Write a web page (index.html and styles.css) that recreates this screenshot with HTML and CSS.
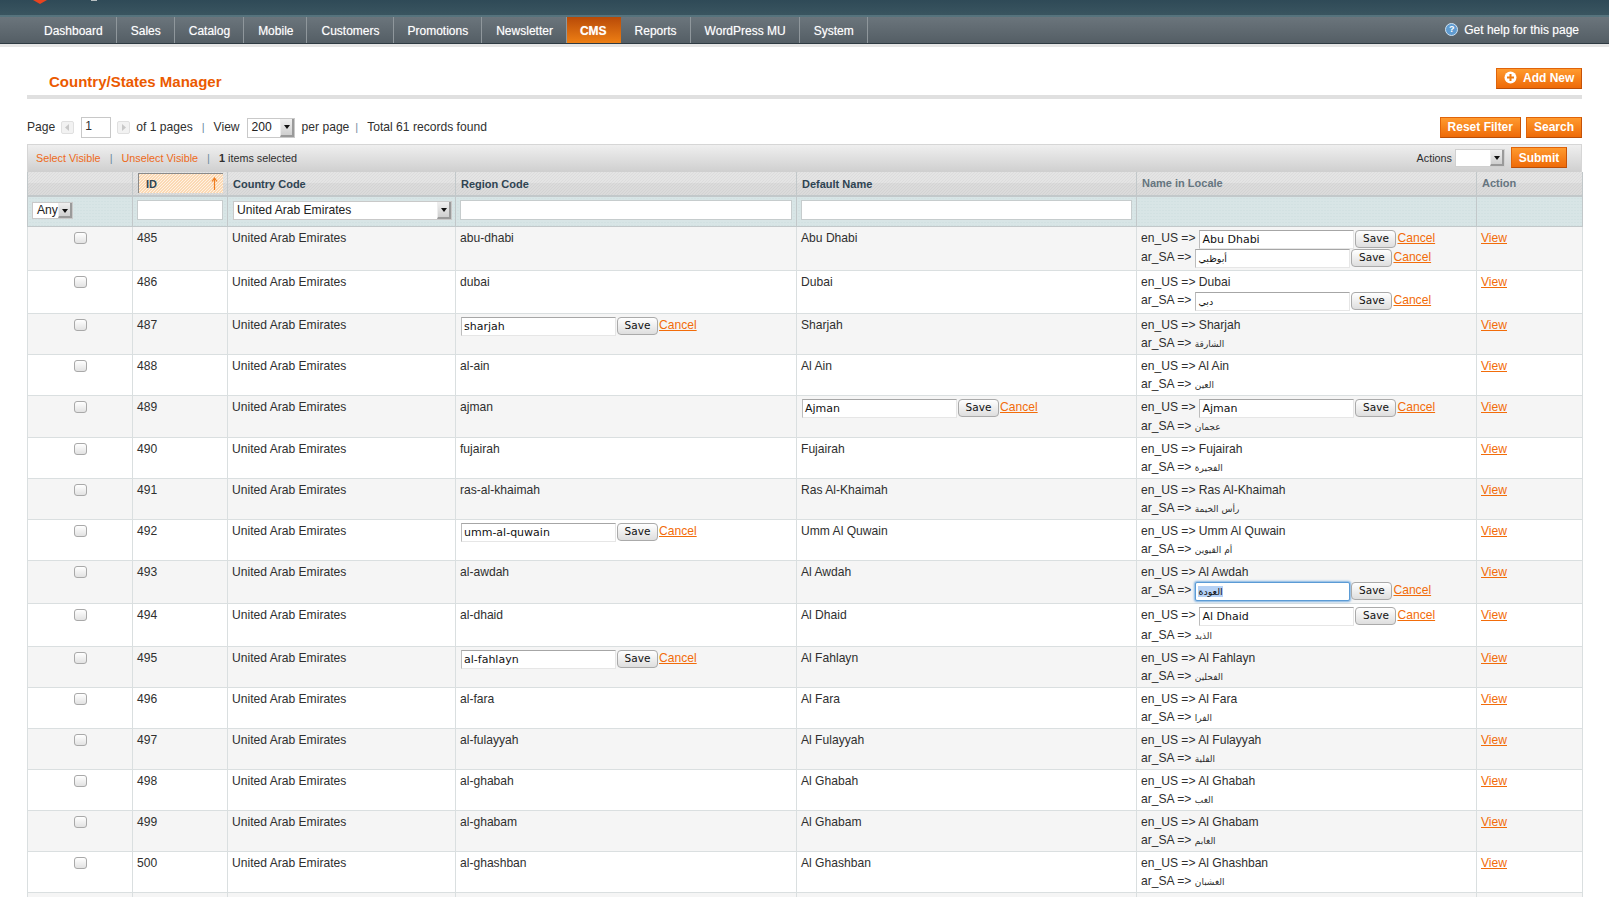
FILE: index.html
```html
<!DOCTYPE html>
<html lang="en">
<head>
<meta charset="utf-8">
<title>Country/States Manager</title>
<link rel="stylesheet" href="styles.css">
</head>
<body>
<header class="masthead">
  <div class="topbar">
    <svg class="logo-tip" width="14" height="4" viewBox="0 0 14 4"><path d="M0 0H14L7 4Z" fill="#e8431f"/></svg>
    <span class="logo-rest"></span>
  </div>
  <nav class="nav">
    <ul class="menu">
      <li>Dashboard</li><li>Sales</li><li>Catalog</li><li>Mobile</li><li>Customers</li><li>Promotions</li><li>Newsletter</li><li class="active">CMS</li><li>Reports</li><li>WordPress MU</li><li>System</li>
    </ul>
    <div class="help"><span class="help-icon">?</span>Get help for this page</div>
  </nav>
</header>
<main class="content">
  <div class="title-row">
    <h1>Country/States Manager</h1>
    <button class="btn add"><svg width="13" height="13" viewBox="0 0 13 13"><circle cx="6.5" cy="6.5" r="6" fill="#fff"/><path d="M6.5 3V10M3 6.5H10" stroke="#ee7a10" stroke-width="2"/></svg>Add New</button>
  </div>
  <div class="pager">
    <span>Page</span>
    <span class="pg-arrow prev"><svg width="5" height="7" viewBox="0 0 5 7"><path d="M4 0V7L0 3.5Z" fill="#c8c8c8"/></svg></span>
    <span class="pg-input">1</span>
    <span class="pg-arrow next"><svg width="5" height="7" viewBox="0 0 5 7"><path d="M1 0V7L5 3.5Z" fill="#c8c8c8"/></svg></span>
    <span class="of">of 1 pages</span>
    <span class="sep">|</span>
    <span>View</span>
    <span class="sel sel-view">200<i class="arrow"></i></span>
    <span>per page</span>
    <span class="sep near">|</span>
    <span>Total 61 records found</span>
    <span class="pager-actions"><button class="btn">Reset Filter</button><button class="btn">Search</button></span>
  </div>
  <div class="massbar">
    <a>Select Visible</a><span class="sep">|</span><a>Unselect Visible</a><span class="sep">|</span><span><b>1</b> items selected</span>
    <span class="mass-actions">Actions<span class="sel sel-action"><i class="arrow"></i></span><button class="btn submit">Submit</button></span>
  </div>
  <table class="grid">
    <colgroup><col class="c1"><col class="c2"><col class="c3"><col class="c4"><col class="c5"><col class="c6"><col class="c7"></colgroup>
    <thead>
      <tr class="heads">
        <th></th>
        <th class="sorted"><div class="id-box">ID<svg width="7" height="13" viewBox="0 0 7 13"><path d="M3.5 1V13M1 4.5L3.5 1L6 4.5" fill="none" stroke="#f07c1e" stroke-width="1.2"/></svg></div></th>
        <th>Country Code</th><th>Region Code</th><th>Default Name</th><th class="dim">Name in Locale</th><th class="dim">Action</th>
      </tr>
      <tr class="filters">
        <th><span class="sel sel-any">Any<i class="arrow"></i></span></th>
        <th><span class="flt"></span></th>
        <th><span class="sel sel-country">United Arab Emirates<i class="arrow"></i></span></th>
        <th><span class="flt"></span></th>
        <th><span class="flt"></span></th>
        <th></th><th></th>
      </tr>
    </thead>
    <tbody>
      <tr><td class="chk"><span class="box"></span></td><td>485</td><td>United Arab Emirates</td><td>abu-dhabi</td><td>Abu Dhabi</td>
        <td class="loc"><div class="line edit tight">en_US =&gt;<span class="field en">Abu Dhabi</span><button class="save">Save</button><a class="cancel">Cancel</a></div><div class="line edit">ar_SA =&gt;<span class="field ar">أبوظبي</span><button class="save">Save</button><a class="cancel">Cancel</a></div></td><td><a class="view">View</a></td></tr>
      <tr><td class="chk"><span class="box"></span></td><td>486</td><td>United Arab Emirates</td><td>dubai</td><td>Dubai</td>
        <td class="loc"><div class="line">en_US =&gt; Dubai</div><div class="line edit">ar_SA =&gt;<span class="field ar">دبي</span><button class="save">Save</button><a class="cancel">Cancel</a></div></td><td><a class="view">View</a></td></tr>
      <tr><td class="chk"><span class="box"></span></td><td>487</td><td>United Arab Emirates</td><td><div class="line edit solo"><span class="field">sharjah</span><button class="save">Save</button><a class="cancel">Cancel</a></div></td><td>Sharjah</td>
        <td class="loc"><div class="line">en_US =&gt; Sharjah</div><div class="line">ar_SA =&gt; <span class="arab">الشارقة</span></div></td><td><a class="view">View</a></td></tr>
      <tr><td class="chk"><span class="box"></span></td><td>488</td><td>United Arab Emirates</td><td>al-ain</td><td>Al Ain</td>
        <td class="loc"><div class="line">en_US =&gt; Al Ain</div><div class="line">ar_SA =&gt; <span class="arab">العين</span></div></td><td><a class="view">View</a></td></tr>
      <tr><td class="chk"><span class="box"></span></td><td>489</td><td>United Arab Emirates</td><td>ajman</td><td><div class="line edit solo"><span class="field">Ajman</span><button class="save">Save</button><a class="cancel">Cancel</a></div></td>
        <td class="loc"><div class="line edit tight">en_US =&gt;<span class="field en">Ajman</span><button class="save">Save</button><a class="cancel">Cancel</a></div><div class="line">ar_SA =&gt; <span class="arab">عجمان</span></div></td><td><a class="view">View</a></td></tr>
      <tr><td class="chk"><span class="box"></span></td><td>490</td><td>United Arab Emirates</td><td>fujairah</td><td>Fujairah</td>
        <td class="loc"><div class="line">en_US =&gt; Fujairah</div><div class="line">ar_SA =&gt; <span class="arab">الفجيرة</span></div></td><td><a class="view">View</a></td></tr>
      <tr><td class="chk"><span class="box"></span></td><td>491</td><td>United Arab Emirates</td><td>ras-al-khaimah</td><td>Ras Al-Khaimah</td>
        <td class="loc"><div class="line">en_US =&gt; Ras Al-Khaimah</div><div class="line">ar_SA =&gt; <span class="arab">رأس الخيمة</span></div></td><td><a class="view">View</a></td></tr>
      <tr><td class="chk"><span class="box"></span></td><td>492</td><td>United Arab Emirates</td><td><div class="line edit solo"><span class="field">umm-al-quwain</span><button class="save">Save</button><a class="cancel">Cancel</a></div></td><td>Umm Al Quwain</td>
        <td class="loc"><div class="line">en_US =&gt; Umm Al Quwain</div><div class="line">ar_SA =&gt; <span class="arab">أم القيوين</span></div></td><td><a class="view">View</a></td></tr>
      <tr><td class="chk"><span class="box"></span></td><td>493</td><td>United Arab Emirates</td><td>al-awdah</td><td>Al Awdah</td>
        <td class="loc"><div class="line">en_US =&gt; Al Awdah</div><div class="line edit">ar_SA =&gt;<span class="field ar focus"><mark>العودة</mark></span><button class="save">Save</button><a class="cancel">Cancel</a></div></td><td><a class="view">View</a></td></tr>
      <tr><td class="chk"><span class="box"></span></td><td>494</td><td>United Arab Emirates</td><td>al-dhaid</td><td>Al Dhaid</td>
        <td class="loc"><div class="line edit">en_US =&gt;<span class="field en">Al Dhaid</span><button class="save">Save</button><a class="cancel">Cancel</a></div><div class="line">ar_SA =&gt; <span class="arab">الذيد</span></div></td><td><a class="view">View</a></td></tr>
      <tr><td class="chk"><span class="box"></span></td><td>495</td><td>United Arab Emirates</td><td><div class="line edit solo"><span class="field">al-fahlayn</span><button class="save">Save</button><a class="cancel">Cancel</a></div></td><td>Al Fahlayn</td>
        <td class="loc"><div class="line">en_US =&gt; Al Fahlayn</div><div class="line">ar_SA =&gt; <span class="arab">الفحلين</span></div></td><td><a class="view">View</a></td></tr>
      <tr><td class="chk"><span class="box"></span></td><td>496</td><td>United Arab Emirates</td><td>al-fara</td><td>Al Fara</td>
        <td class="loc"><div class="line">en_US =&gt; Al Fara</div><div class="line">ar_SA =&gt; <span class="arab">الفرا</span></div></td><td><a class="view">View</a></td></tr>
      <tr><td class="chk"><span class="box"></span></td><td>497</td><td>United Arab Emirates</td><td>al-fulayyah</td><td>Al Fulayyah</td>
        <td class="loc"><div class="line">en_US =&gt; Al Fulayyah</div><div class="line">ar_SA =&gt; <span class="arab">الفلية</span></div></td><td><a class="view">View</a></td></tr>
      <tr><td class="chk"><span class="box"></span></td><td>498</td><td>United Arab Emirates</td><td>al-ghabah</td><td>Al Ghabah</td>
        <td class="loc"><div class="line">en_US =&gt; Al Ghabah</div><div class="line">ar_SA =&gt; <span class="arab">الغب</span></div></td><td><a class="view">View</a></td></tr>
      <tr><td class="chk"><span class="box"></span></td><td>499</td><td>United Arab Emirates</td><td>al-ghabam</td><td>Al Ghabam</td>
        <td class="loc"><div class="line">en_US =&gt; Al Ghabam</div><div class="line">ar_SA =&gt; <span class="arab">الغابم</span></div></td><td><a class="view">View</a></td></tr>
      <tr><td class="chk"><span class="box"></span></td><td>500</td><td>United Arab Emirates</td><td>al-ghashban</td><td>Al Ghashban</td>
        <td class="loc"><div class="line">en_US =&gt; Al Ghashban</div><div class="line">ar_SA =&gt; <span class="arab">الغشبان</span></div></td><td><a class="view">View</a></td></tr>
      <tr class="cut"><td></td><td></td><td></td><td></td><td></td><td></td><td></td></tr>
    </tbody>
  </table>
</main>
</body>
</html>
```
FILE: styles.css
```css
* { box-sizing: border-box; }
html, body { margin: 0; height: 897px; overflow: hidden; background: #fff; }
body { font: 12.1px/16px "Liberation Sans", Arial, sans-serif; color: #2f2f2f; }

.topbar { height: 15px; background: linear-gradient(#2f4a57, #3a5560); display: flex; align-items: flex-start; padding-left: 33px; gap: 44px; }
.logo-rest { width: 6px; height: 1px; background: #b9c0c2; }
.nav { height: 29px; display: flex; justify-content: space-between; border-top: 2px solid #56737d; background: linear-gradient(#6b757c, #545e65); border-bottom: 1px solid #2e3a42; box-shadow: 0 3px 0 #e6e6e6; color: #fff; }
.menu { list-style: none; margin: 0; padding: 0 0 0 30px; display: flex; }
.menu li { padding: 1px 13px 0 14px; line-height: 26px; border-right: 1px solid #8f979c; font-size: 12px; text-shadow: 0 0 1px rgba(255,255,255,.5); }
.menu .active { background: linear-gradient(#b84a08, #ee7f14); font-weight: bold; border-right: 0; padding: 1px 14px 0 13px; }
.help { display: flex; align-items: center; height: 25px; padding-right: 30px; gap: 6px; font-size: 12px; text-shadow: 0 0 1px rgba(255,255,255,.4); }
.help-icon { width: 13px; height: 13px; border-radius: 50%; background: #5f9bd0; border: 1px solid #cfe2f2; font: bold 9px/11px "Liberation Sans", sans-serif; text-align: center; color: #fff; text-shadow: none; }

.content { padding: 0 27px; }
.title-row { display: flex; justify-content: space-between; align-items: flex-start; margin-top: 24px; padding: 0 0 6px 22px; border-bottom: 4px solid #e0e0e0; height: 31px; }
h1 { margin: 4px 0 0; font: bold 15px/20px "Liberation Sans", Arial, sans-serif; color: #eb5a00; }

.btn { height: 21px; padding: 0 7px; border: 1px solid #e0640a; border-right-color: #c65208; border-bottom-color: #b94e08; background: linear-gradient(#ff9a2e, #ee6a08); color: #fff; font: bold 12px/18px "Liberation Sans", Arial, sans-serif; }
.add { display: flex; align-items: center; gap: 6px; width: 86px; padding: 0 0 2px 7px; }

.pager { display: flex; align-items: center; height: 21px; margin: 18px 0 6px; padding-bottom: 2px; gap: 6px; }
.pager .btn { padding-bottom: 2px; }
.pg-arrow { width: 13px; height: 13px; margin-bottom: -2px; background: #f2f2f2; border: 1px solid #e0e0e0; border-radius: 2px; display: flex; align-items: center; justify-content: center; }
.pg-input { width: 30px; height: 21px; margin: 0 0 -2px 1px; border: 1px solid #c8c8c8; padding: 0 3px; }
.sep { color: #6d8ba0; margin: 0 3px; font-size: 11px; }
.sep.near { margin-left: 0; }
.pager-actions { margin: 0 0 -2px auto; display: flex; gap: 5px; }

.sel { position: relative; display: inline-block; background: #fff; border: 1px solid #c9c9c9; color: #222; }
.arrow { position: absolute; right: 0; top: 0; bottom: 0; width: 14px; background: linear-gradient(#f0f0f0, #cfcfcf); border-left: 1px solid #eee; border-right: 2px solid #9a9a9a; border-bottom: 2px solid #9a9a9a; }
.arrow::after { content: ""; position: absolute; left: 3px; top: 6px; border: 3px solid transparent; border-top: 4px solid #111; border-bottom: 0; }
.sel-view { width: 48px; height: 20px; margin: 0 1px -2px; padding: 0 4px; }

.massbar { height: 28px; display: flex; align-items: center; padding: 0 14px 2px 8px; border: 1px solid #d6d6d6; border-bottom: 0; background: linear-gradient(#efefef, #cfcfcf); font-size: 10.8px; }
.massbar a { color: #ee6a1a; }
.massbar .sep { margin: 0 9px; }
.mass-actions { margin-left: auto; display: flex; align-items: center; }
.sel-action { width: 50px; height: 18px; margin: 0 6px 0 3px; border-color: #d0d0d0; }
.submit { height: 21px; width: 56px; padding: 0; }

.grid { width: 1555px; table-layout: fixed; border-collapse: collapse; border-left: 1px solid #c9cfd0; }
.c1 { width: 105px; } .c2 { width: 95px; } .c3 { width: 228px; } .c4 { width: 341px; } .c5 { width: 340px; } .c6 { width: 340px; } .c7 { width: 106px; }
.heads th { height: 23px; padding: 0 5px; font: bold 11px/14px "Liberation Sans", Arial, sans-serif; color: #2f4452; text-align: left; border: 1px solid #c2c8ca; border-width: 0 1px 2px 1px; background: linear-gradient(transparent 50%, rgba(0,0,0,.04) 50%), linear-gradient(135deg, #dcdcdc 25%, #ebebeb 25%, #ebebeb 50%, #dcdcdc 50%, #dcdcdc 75%, #ebebeb 75%) 0 0 / 3px 3px; }
.heads th.dim { color: #66757f; padding-bottom: 2px; }
.heads th.sorted { padding: 1px 4px 2px 5px; }
.id-box { display: flex; justify-content: space-between; align-items: center; height: 20px; padding: 0 5px 0 7px; border-top: 1px solid #8a8a8a; border-left: 1px solid #8a8a8a; background: linear-gradient(135deg, #fbd9b4 25%, #fff2e4 25%, #fff2e4 50%, #fbd9b4 50%, #fbd9b4 75%, #fff2e4 75%) 0 0 / 3px 3px; }
.filters th { height: 30px; padding: 0 4px 2px; font-weight: normal; text-align: left; vertical-align: middle; background-color: #d8e5e6; background-image: radial-gradient(#cbdcdd 1px, transparent 1px); background-size: 3px 3px; border: 1px solid #c2c8ca; border-width: 0 1px 1px 1px; }
.flt { display: block; height: 20px; background: #fff; border: 1px solid #c6cccd; }
.sel-any { width: 41px; height: 17px; line-height: 15px; padding-left: 4px; }
.sel-country { display: block; height: 19px; line-height: 17px; padding-left: 3px; margin: 0 0 0 1px; width: 219px; }

td { padding: 3px 4px 0; vertical-align: top; border: 1px solid #dadfe0; }
tbody tr:nth-child(odd) td { background: #f5f5f5; }
.chk { text-align: center; padding-top: 5px; }
.box { display: inline-block; width: 13px; height: 12px; border: 1px solid #a9a9a9; border-radius: 3px; background: linear-gradient(#fff, #e2e2e2); }
td.loc { padding-top: 2px; padding-bottom: 2px; }
.line { height: 18px; line-height: 18px; white-space: nowrap; }
.edit { display: flex; height: 20px; }
.edit.tight { height: 19px; }
.solo { margin: -1px 0 0 1px; }
.arab { font: 9px "DejaVu Sans", sans-serif; }
.field { display: block; width: 155px; height: 19px; margin: 1px 0 0 4px; padding: 0 2px; font: 11px/18px "DejaVu Sans", sans-serif; color: #111; background: #fff; border: 1px solid #e6e6e6; border-top-color: #a6a6a6; border-left-color: #bcbcbc; }
.solo .field { margin-left: 0; }
.field.ar { font-size: 9.5px; }
.focus { border: 1px solid #5b9bd5; box-shadow: 0 0 2px 1px #7fb2e2; border-radius: 2px; }
mark { background: #b5d1f5; color: #111; }
.save { width: 41px; height: 18px; margin: 1px 0 0 1px; padding: 0; border: 1px solid #aaa; border-radius: 4px; background: linear-gradient(#fff, #dedede); font: 10.5px/15px "DejaVu Sans", sans-serif; color: #111; }
.cancel { margin-left: 1px; }
a.cancel, a.view { color: #f26c0a; text-decoration: underline; }
.cut td { height: 30px; }
```
